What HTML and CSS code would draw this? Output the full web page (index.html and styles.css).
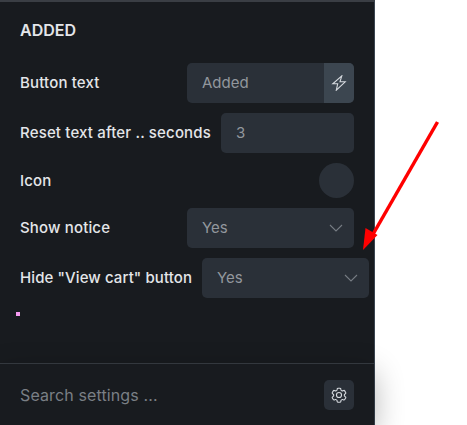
FILE: index.html
```html
<!DOCTYPE html>
<html lang="en">

<head>
    <meta charset="UTF-8">
    <title>Added settings</title>
    <link rel="stylesheet" href="styles.css">
</head>

<body>
<div class="panel">
    <div class="settings">
        <h2 class="heading">ADDED</h2>
        <div class="row">
            <label class="label">Button text</label>
            <div class="control">
                <span class="value">Added</span>
                <span class="dynamic">
                    <svg width="16" height="16" viewBox="0 0 16 16" fill="none" stroke="#d5d9de" stroke-width="1.1" stroke-linejoin="miter">
                        <path d="M10.800 0.800 1.800 8.800h4.900L5.300 15.200 14.200 6.800H9z"/>
                    </svg>
                </span>
            </div>
        </div>
        <div class="row">
            <label class="label">Reset text after .. seconds</label>
            <div class="control"><span class="value">3</span></div>
        </div>
        <div class="row row-icon">
            <label class="label">Icon</label>
            <div class="swatch"></div>
        </div>
        <div class="row">
            <label class="label">Show notice</label>
            <div class="control select">
                <span class="value">Yes</span>
                <svg class="chevron" width="14" height="8" viewBox="0 0 14 8" fill="none" stroke="#757b82" stroke-width="1.1">
                    <path d="M1 1l6 6 6-6"/>
                </svg>
            </div>
        </div>
        <div class="row">
            <label class="label label-tight">Hide "View cart" button</label>
            <div class="control select">
                <span class="value">Yes</span>
                <svg class="chevron" width="14" height="8" viewBox="0 0 14 8" fill="none" stroke="#757b82" stroke-width="1.1">
                    <path d="M1 1l6 6 6-6"/>
                </svg>
            </div>
        </div>
        <div class="dot"></div>
    </div>
    <div class="footer">
        <span class="search">Search settings ...</span>
        <button class="gear">
            <svg width="18" height="18" viewBox="0 0 24 24" fill="none" stroke="#d5d9de" stroke-width="1.5" stroke-linejoin="round">
                <path d="M9.6 3.9c.1-.5.5-.9 1.1-.9h2.6c.6 0 1 .4 1.1.9l.2 1.3c.1.4.4.7.7.9l.5.3c.3.2.8.2 1.1.1l1.3-.5c.5-.2 1.1 0 1.4.5l1.3 2.2c.3.5.2 1.1-.3 1.4l-1 .9c-.3.2-.5.6-.5 1v.6c0 .4.2.8.5 1l1 .9c.5.3.6.9.3 1.4l-1.3 2.2c-.3.5-.9.7-1.4.5l-1.3-.5c-.3-.1-.8-.1-1.1.1l-.5.3c-.3.2-.6.5-.7.9l-.2 1.3c-.1.5-.5.9-1.1.9h-2.600c-.6 0-1-.4-1.1-.9l-.2-1.3c-.1-.4-.4-.7-.7-.9l-.5-.3c-.3-.2-.8-.2-1.1-.1l-1.3.5c-.5.2-1.1 0-1.4-.5l-1.3-2.2c-.3-.5-.2-1.1.3-1.4l1-.9c.3-.2.5-.6.5-1v-.6c0-.4-.2-.8-.5-1l-1-.9c-.5-.3-.6-.9-.3-1.4l1.300-2.2c.3-.5.9-.7 1.4-.5l1.3.5c.3.1.8.1 1.1-.1l.5-.3c.3-.2.6-.5.7-.9z"/>
                <circle cx="12" cy="12" r="3.4"/>
            </svg>
        </button>
    </div>
</div>

<!-- annotation drawn on top of the screenshot -->
<svg class="arrow" width="467" height="425" viewBox="0 0 467 425">
    <path d="M437.500 122 372 236" stroke="#ff0000" stroke-width="3.500" fill="none"/>
    <path d="M363 250 365.500 228 377.500 235z" fill="#ff0000"/>
</svg>
</body>

</html>
```

FILE: styles.css
```css
body {
    font-family: 'Inter', sans-serif;
    margin: 0;
    height: 425px;
    overflow: hidden;
    background-color: #fff;
}

.panel {
    width: 375px;
    height: 425px;
    box-sizing: border-box;
    display: flex;
    flex-direction: column;
    background-color: #181b1f;
    border-top: 2px solid #3a3e44;
    border-right: 1px solid #3b4550;
}

.settings {
    flex: 1;
    min-height: 0;
    padding: 19px 20px 0;
}

.heading {
    margin: 0 0 23px;
    height: 19px;
    line-height: 19px;
    font-size: 16px;
    font-weight: 600;
    color: #e4e6e9;
}

.row {
    display: flex;
    align-items: center;
    gap: 10px;
    height: 40px;
    margin-bottom: 10px;
}

.row-icon {
    height: 35px;
}

.label {
    flex: 1 0 auto;
    margin-top: -1px;
    font-size: 15px;
    font-weight: 500;
    letter-spacing: 0.16px;
    color: #e4e6e9;
    white-space: nowrap;
}

.label-tight {
    letter-spacing: 0.1px;
}

.control {
    flex: 0 1 167px;
    min-width: 0;
    height: 40px;
    display: flex;
    align-items: center;
    border-radius: 5px;
    background-color: #2a3038;
    overflow: hidden;
}

.select {
    flex-shrink: 0;
    justify-content: space-between;
    padding-right: 11px;
    box-sizing: border-box;
}

.value {
    flex: 1;
    margin-top: -1px;
    padding-left: 15px;
    font-size: 15px;
    color: #92979d;
}

.dynamic {
    width: 30px;
    height: 40px;
    display: flex;
    align-items: center;
    justify-content: center;
    background-color: #3c4650;
}

.swatch {
    width: 35px;
    height: 35px;
    border-radius: 50%;
    background-color: #2a3038;
}

.dot {
    width: 4px;
    height: 4px;
    margin: 14px 0 0 -4px;
    background-color: #f59af0;
}

.footer {
    position: relative;
    height: 62px;
    box-sizing: border-box;
    display: flex;
    align-items: center;
    justify-content: space-between;
    padding: 0 20px;
    border-top: 1px solid #33383e;
    box-shadow: 0 10px 30px rgba(0, 0, 0, 0.3);
}

.search {
    font-size: 16px;
    letter-spacing: 0.12px;
    color: #7a7f85;
}

.gear {
    width: 30px;
    height: 30px;
    padding: 0;
    border: 0;
    border-radius: 5px;
    display: flex;
    align-items: center;
    justify-content: center;
    background-color: #2a3038;
}

.arrow {
    position: absolute;
    left: 0;
    top: 0;
}
```
